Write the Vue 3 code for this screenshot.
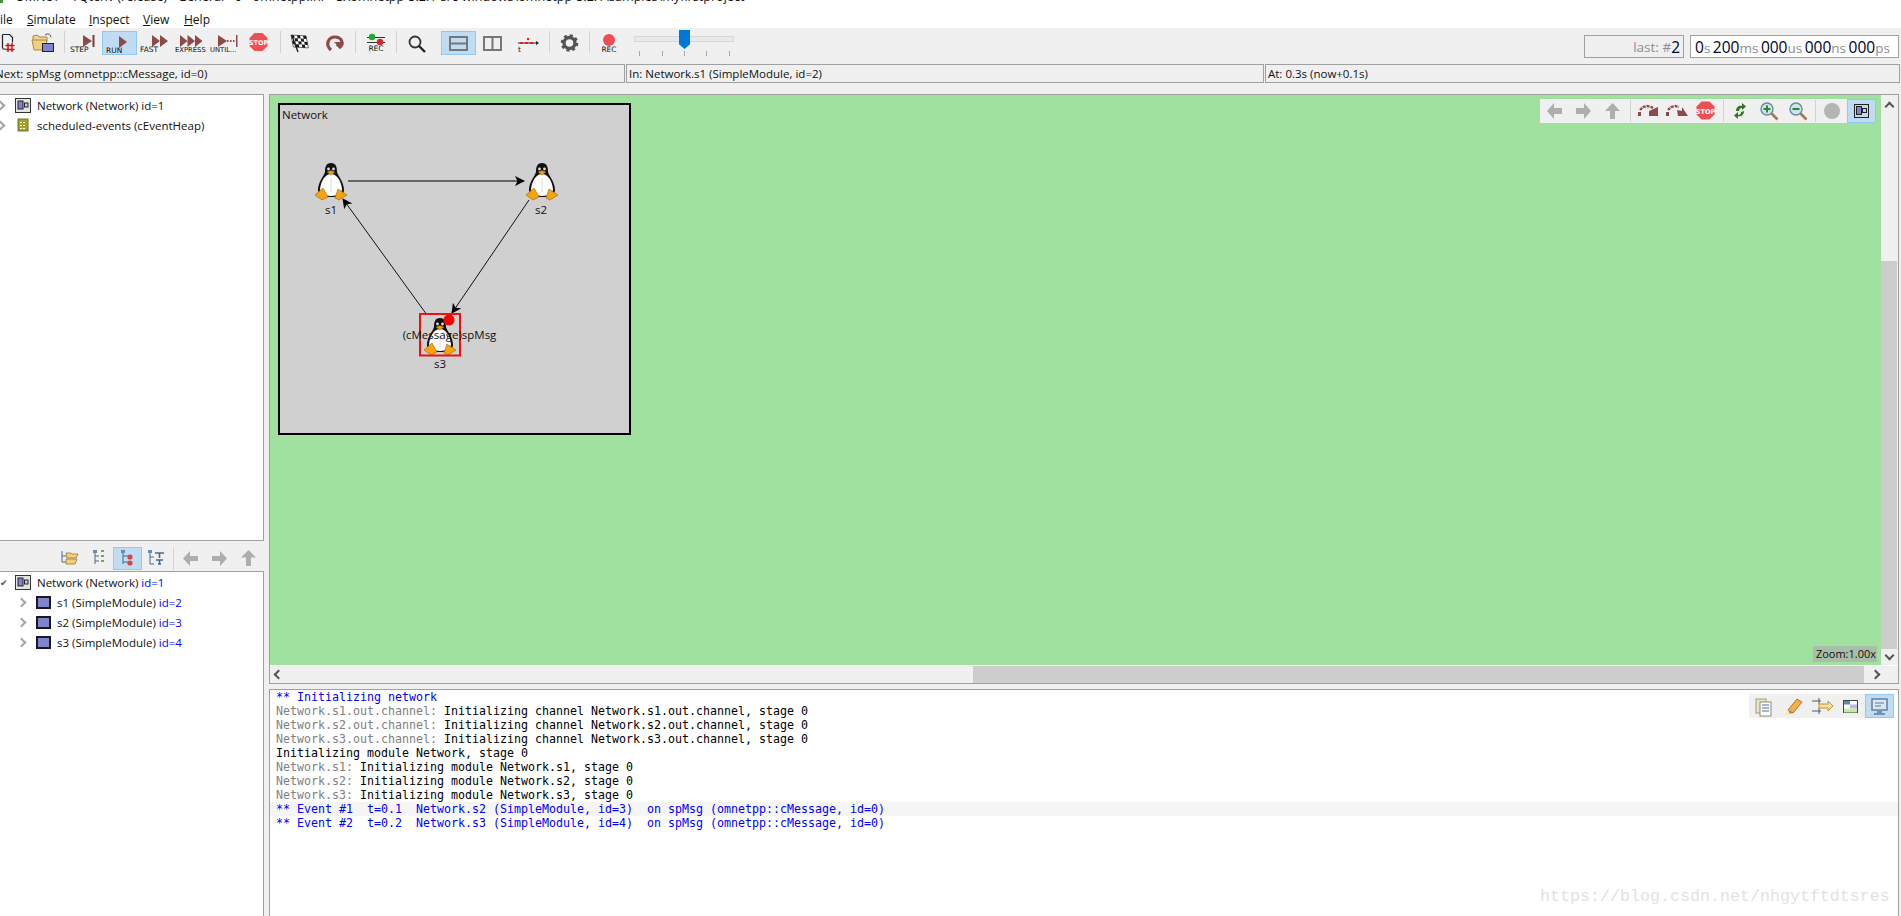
<script setup>
const menus = [
  { u: '', t: 'ile', w: 27 },
  { u: 'S', t: 'imulate', w: 62 },
  { u: 'I', t: 'nspect', w: 54 },
  { u: 'V', t: 'iew', w: 41 },
  { u: 'H', t: 'elp', w: 30 }
]
const ticks = [5, 28, 50, 72, 95]
const logLines = [
  { kind: 'info', text: '** Initializing network' },
  { pre: 'Network.s1.out.channel: ', text: 'Initializing channel Network.s1.out.channel, stage 0' },
  { pre: 'Network.s2.out.channel: ', text: 'Initializing channel Network.s2.out.channel, stage 0' },
  { pre: 'Network.s3.out.channel: ', text: 'Initializing channel Network.s3.out.channel, stage 0' },
  { text: 'Initializing module Network, stage 0' },
  { pre: 'Network.s1: ', text: 'Initializing module Network.s1, stage 0' },
  { pre: 'Network.s2: ', text: 'Initializing module Network.s2, stage 0' },
  { pre: 'Network.s3: ', text: 'Initializing module Network.s3, stage 0' },
  { kind: 'info hl', text: '** Event #1  t=0.1  Network.s2 (SimpleModule, id=3)  on spMsg (omnetpp::cMessage, id=0)' },
  { kind: 'info', text: '** Event #2  t=0.2  Network.s3 (SimpleModule, id=4)  on spMsg (omnetpp::cMessage, id=0)' }
]
const modules = [
  { name: 's1 (SimpleModule) ', id: 'id=2' },
  { name: 's2 (SimpleModule) ', id: 'id=3' },
  { name: 's3 (SimpleModule) ', id: 'id=4' }
]
const penguins = [
  { x: 331, y: 182 },
  { x: 542, y: 182 },
  { x: 440, y: 337 }
]
</script>

<template>
  <div class="app">
    <div class="title"><span class="title-icon"></span><span class="title-text">OMNeT++/Qtenv (release) - General - 0 - omnetpp.ini - C:\omnetpp-5.2.1-src-windows\omnetpp-5.2.1\samples\myfirstproject</span></div>
    <div class="menubar">
      <span v-for="m in menus" :key="m.t" class="menu" :style="{ width: m.w + 'px' }"><u>{{ m.u }}</u>{{ m.t }}</span>
    </div>

    <div class="toolbar">
      <div class="btn first">
        <svg width="26" height="24" viewBox="0 0 26 24"><path d="M2.500 3.500h7l3 3v5M2.500 3.500v14" fill="none" stroke="#222" stroke-width="1.200"/><path d="M2.500 18h3" stroke="#222"/><path d="M8 12v9M12 12v9M5.500 14.500h9M5.500 18.500h9" stroke="#d01010" stroke-width="1.400" fill="none"/></svg>
      </div>
      <div class="btn">
        <svg width="35" height="24" viewBox="0 0 35 24"><path d="M7 5l4-1 3 2h7v4H7z" fill="#e8d49a" stroke="#a88a3c"/><path d="M6 9h15l-2 10H8z" fill="#f2cf80" stroke="#b08a3c"/><rect x="16.500" y="12.500" width="11" height="8" fill="#7f85cc" stroke="#222"/><path d="M19 4c3-2 5-1 6 2" fill="none" stroke="#555"/></svg>
      </div>
      <i class="sep"></i>
      <div class="btn">
        <svg width="35" height="24" viewBox="0 0 35 24"><path d="M16 4l9 6-9 6z" fill="#8e4a4a"/><rect x="25.500" y="4" width="2" height="12" fill="#7c3a3a"/><text x="3" y="21" class="lbl">STEP</text></svg>
      </div>
      <div class="btn on">
        <svg width="35" height="24" viewBox="0 0 35 24"><path d="M17 5l8 6-8 6z" fill="#8e4a4a"/><text x="4" y="22" class="lbl">RUN</text></svg>
      </div>
      <div class="btn">
        <svg width="35" height="24" viewBox="0 0 35 24"><path d="M15 4l8 6-8 6zM23 4l8 6-8 6z" fill="#8e4a4a"/><text x="3" y="21" class="lbl">FAST</text></svg>
      </div>
      <div class="btn">
        <svg width="35" height="24" viewBox="0 0 35 24"><path d="M8 4l7.500 6-7.500 6zM15.500 4l7.500 6-7.500 6zM23 4l7.500 6-7.500 6z" fill="#8e4a4a"/><text x="3" y="21" class="lbl narrow">EXPRESS</text></svg>
      </div>
      <div class="btn">
        <svg width="35" height="24" viewBox="0 0 35 24"><path d="M11 4l9 6-9 6z" fill="#8e4a4a"/><path d="M20 10h9" stroke="#8e4a4a" stroke-dasharray="1.500 1.500" stroke-width="2"/><rect x="29" y="4" width="1.500" height="12" fill="#8e4a4a"/><text x="3" y="21" class="lbl narrow">UNTIL...</text></svg>
      </div>
      <div class="btn">
        <svg width="35" height="24" viewBox="0 0 35 24"><path d="M12.500 2h8l5 5v8l-5 5h-8l-5-5V7z" fill="#ee4f55"/><text x="16.500" y="14" class="stop" text-anchor="middle">STOP</text></svg>
      </div>
      <i class="sep"></i>
      <div class="btn">
        <svg width="35" height="24" viewBox="0 0 35 24">
          <g transform="matrix(1 .06 .2 1 8 4)">
            <rect width="15" height="12" fill="#fff" stroke="#222" stroke-width=".6"/>
            <path d="M0 0h3v3H0zM6 0h3v3H6zM12 0h3v3h-3zM3 3h3v3H3zM9 3h3v3H9zM0 6h3v3H0zM6 6h3v3H6zM12 6h3v3h-3zM3 9h3v3H3zM9 9h3v3H9z" fill="#1a1a1a"/>
          </g>
          <path d="M9 5l6 16" stroke="#222" stroke-width="1.400"/>
        </svg>
      </div>
      <div class="btn">
        <svg width="35" height="24" viewBox="0 0 35 24"><path d="M13 19c-6-5-3-13 4-13s9 7 5 10l-3-3" fill="none" stroke="#8e4a4a" stroke-width="3.200"/><path d="M16 11h7v7z" fill="#8e4a4a"/></svg>
      </div>
      <i class="sep s5"></i>
      <div class="btn">
        <svg width="35" height="24" viewBox="0 0 35 24"><path d="M9 6.500h18M9 11.500h18" stroke="#333" stroke-width="1.200"/><circle cx="14" cy="6" r="3.200" fill="#1faa2a"/><circle cx="22" cy="11" r="3.200" fill="#d8262c"/><text x="18" y="20" class="lbl" text-anchor="middle">REC</text></svg>
      </div>
      <i class="sep"></i>
      <div class="btn">
        <svg width="35" height="24" viewBox="0 0 35 24"><circle cx="16" cy="11" r="5.500" fill="none" stroke="#333" stroke-width="1.800"/><path d="M20 15l6 6" stroke="#222" stroke-width="2.400"/></svg>
      </div>
      <i class="sep s7 blank"></i>
      <div class="btn on">
        <svg width="35" height="24" viewBox="0 0 35 24"><rect x="9" y="6" width="17" height="13" fill="none" stroke="#777" stroke-width="2"/><path d="M9 12.500h17" stroke="#777" stroke-width="2"/></svg>
      </div>
      <div class="btn">
        <svg width="35" height="24" viewBox="0 0 35 24"><rect x="8" y="6" width="17" height="13" fill="none" stroke="#777" stroke-width="2"/><path d="M16.500 6v13" stroke="#777" stroke-width="2"/></svg>
      </div>
      <div class="btn">
        <svg width="35" height="24" viewBox="0 0 35 24"><path d="M7 12h20" stroke="#222"/><path d="M25 10l3 2-3 2z" fill="#222"/><path d="M9 12h3M14 12h3M19 12h3" stroke="#e02020" stroke-width="2"/><circle cx="17" cy="8" r="1.200" fill="#e02020"/><text x="7" y="21" class="lbl">t</text></svg>
      </div>
      <i class="sep"></i>
      <div class="btn">
        <svg width="35" height="24" viewBox="0 0 35 24"><circle cx="17.500" cy="12" r="5.500" fill="none" stroke="#555" stroke-width="3.400"/><circle cx="17.500" cy="12" r="7.500" fill="none" stroke="#555" stroke-width="2.600" stroke-dasharray="3 2.890"/></svg>
      </div>
      <i class="sep s5"></i>
      <div class="btn">
        <svg width="35" height="24" viewBox="0 0 35 24"><circle cx="17" cy="9" r="6" fill="#ee4f55"/><text x="17" y="21" class="lbl" text-anchor="middle">REC</text></svg>
      </div>
      <div class="slider">
        <div class="track"></div>
        <div class="handle"></div>
        <i v-for="t in ticks" :key="t" class="tick" :style="{ left: t + 'px' }"></i>
      </div>
      <div class="spacer"></div>
      <div class="last"><span class="gray">last: #</span><span class="big">2</span></div>
      <div class="time"><span class="time-in"><span class="big">0</span><span class="gray">s</span>&#32;<span class="big">200</span><span class="gray">ms</span>&#32;<span class="big">000</span><span class="gray">us</span>&#32;<span class="big">000</span><span class="gray">ns</span>&#32;<span class="big">000</span><span class="gray">ps</span></span></div>
    </div>

    <div class="status">
      <div class="cell c1"><span class="clip">Next: spMsg (omnetpp::cMessage, id=0)</span></div>
      <div class="cell c2">In: Network.s1 (SimpleModule, id=2)</div>
      <div class="cell c3">At: 0.3s (now+0.1s)</div>
    </div>

    <div class="main">
      <aside class="left">
        <div class="tree upper">
          <div class="row">
            <span class="chev top"></span>
            <svg class="tico" width="16" height="15" viewBox="0 0 16 15"><rect x=".5" y=".5" width="15" height="14" fill="#e4e4e4" stroke="#333"/><rect x="3" y="3" width="5" height="8" fill="#7f85cc" stroke="#222"/><rect x="9.500" y="5" width="3.500" height="4" fill="#c8c8e8" stroke="#222"/></svg>
            <span>Network (Network) id=1</span>
          </div>
          <div class="row">
            <span class="chev top"></span>
            <svg class="tico" width="16" height="15" viewBox="0 0 16 15"><rect x="3" y="1" width="10" height="12" fill="#a3a32a" stroke="#77771a"/><path d="M5 4.500h6M5 7.500h6M5 10.500h6" stroke="#fff" stroke-width="1.200" stroke-dasharray="2 1"/></svg>
            <span>scheduled-events (cEventHeap)</span>
          </div>
        </div>
        <div class="side-tools">
          <div class="tbtn"><svg width="29" height="23" viewBox="0 0 29 23"><path d="M7 4v11h4M7 9h4" fill="none" stroke="#4a6a8a"/><path d="M11 6h5l1 1h6l-2 4h-9zM11 12h11l-2 5h-9z" fill="#f2cf80" stroke="#b08a3c"/></svg></div>
          <div class="tbtn"><svg width="29" height="23" viewBox="0 0 29 23"><path d="M11 4v13M11 9h4M11 14h4" fill="none" stroke="#4a6a8a"/><rect x="9" y="3" width="4" height="3" fill="#6a8ab0"/><path d="M17 8h3v2h-3zM17 13h3v2h-3zM17 3h3v2h-3z" fill="#6ab04a"/></svg></div>
          <div class="tbtn on"><svg width="29" height="23" viewBox="0 0 29 23"><path d="M10 4v13M10 9h5M10 15h5" fill="none" stroke="#4a6a8a"/><rect x="8" y="3" width="4" height="3" fill="#6a8ab0"/><circle cx="17" cy="10" r="2.600" fill="#e04040"/><circle cx="17" cy="16" r="2.600" fill="#e04040"/></svg></div>
          <div class="tbtn"><svg width="29" height="23" viewBox="0 0 29 23"><path d="M8 5v12h4M8 10h4" fill="none" stroke="#4a6a8a"/><rect x="6" y="3" width="4" height="3" fill="#6a8ab0"/><path d="M13 6h9M17.500 6v5M14 13h7M17.500 13v4M16 17h3" fill="none" stroke="#4a6a8a" stroke-width="1.600"/></svg></div>
          <i class="sep s5"></i>
          <div class="tbtn"><svg width="29" height="23" viewBox="0 0 29 23"><path d="M14 4l-7 7.500 7 7.500v-5h8v-5h-8z" fill="#aeaeae"/></svg></div>
          <div class="tbtn"><svg width="29" height="23" viewBox="0 0 29 23"><path d="M15 4l7 7.500-7 7.500v-5H7V9h8z" fill="#aeaeae"/></svg></div>
          <div class="tbtn"><svg width="29" height="23" viewBox="0 0 29 23"><path d="M14.500 3l7.500 7.500h-5V19h-5v-8.500H7z" fill="#aeaeae"/></svg></div>
        </div>
        <div class="tree lower">
          <div class="row">
            <span class="check">✔</span>
            <svg class="tico" width="16" height="15" viewBox="0 0 16 15"><rect x=".5" y=".5" width="15" height="14" fill="#e4e4e4" stroke="#333"/><rect x="3" y="3" width="5" height="8" fill="#7f85cc" stroke="#222"/><rect x="9.500" y="5" width="3.500" height="4" fill="#c8c8e8" stroke="#222"/></svg>
            <span>Network (Network) <b class="blue">id=1</b></span>
          </div>
          <div v-for="m in modules" :key="m.id" class="row child">
            <span class="chev"></span>
            <span class="mod"></span>
            <span>{{ m.name }}<b class="blue">{{ m.id }}</b></span>
          </div>
        </div>
      </aside>

      <section class="right">
        <div class="canvas-panel">
          <div class="canvas-row">
            <div class="green">
              <svg class="net" width="353" height="332" viewBox="278 103 353 332">
                <defs>
                  <marker id="arrow" markerWidth="10" markerHeight="10" refX="9" refY="5" orient="auto" markerUnits="userSpaceOnUse">
                    <path d="M0 0L10 5L0 10L2.500 5z" fill="#000"/>
                  </marker>
                  <g id="tux">
                    <path d="M0-19C-5-19-6-15-6-10C-7-6-13 0-13 8C-13 13-8 15 0 15C8 15 13 13 13 8C13 0 7-6 6-10C6-15 5-19 0-19z" fill="#111"/>
                    <path d="M0-8C-6-8-10-1-11 7C-11 11-7 14 0 14C7 14 11 11 11 7C10-1 6-8 0-8z" fill="#fff"/>
                    <path d="M0-4v14" stroke="#ccc" stroke-width=".7"/>
                    <circle cx="-2.500" cy="-13" r="1.400" fill="#ddd"/>
                    <circle cx="2.500" cy="-13" r="1.400" fill="#ddd"/>
                    <path d="M-4-10L0-11.500L4-10L0-7z" fill="#f0a010" stroke="#8a5a00" stroke-width=".5"/>
                    <path d="M-16 13L-8 6L-3 15L-9 18z" fill="#f5a30f" stroke="#a06800" stroke-width=".6"/>
                    <path d="M16 13L7 7L4 16L8 18z" fill="#f5a30f" stroke="#a06800" stroke-width=".6"/>
                  </g>
                </defs>
                <rect x="279" y="104" width="351" height="330" fill="#d0d0d0" stroke="#000" stroke-width="2"/>
                <text x="282" y="119" class="ntext">Network</text>
                <path d="M348 181H524" stroke="#666" stroke-width="2" marker-end="url(#arrow)"/>
                <path d="M529 200L452 313" stroke="#111" marker-end="url(#arrow)"/>
                <path d="M427 315L343 199" stroke="#111" marker-end="url(#arrow)"/>
                <use v-for="p in penguins" :key="p.x" href="#tux" :x="p.x" :y="p.y"/>
                <rect x="420" y="314" width="40" height="41.500" fill="none" stroke="#f01010" stroke-width="2"/>
                <circle cx="449" cy="320" r="5.500" fill="#f60000"/>
                <text x="331" y="214" class="ntext" text-anchor="middle">s1</text>
                <text x="541" y="214" class="ntext" text-anchor="middle">s2</text>
                <text x="440" y="368" class="ntext" text-anchor="middle">s3</text>
                <text x="449.500" y="339" class="ntext" text-anchor="middle">(cMessage)spMsg</text>
              </svg>
              <div class="view-tools">
                <div class="tbtn"><svg width="29" height="24" viewBox="0 0 29 24"><path d="M14 4l-7 8 7 8v-5h8V9h-8z" fill="#aeaeae"/></svg></div>
                <div class="tbtn"><svg width="29" height="24" viewBox="0 0 29 24"><path d="M15 4l7 8-7 8v-5H7V9h8z" fill="#aeaeae"/></svg></div>
                <div class="tbtn w30"><svg width="29" height="24" viewBox="0 0 29 24"><path d="M14.500 4l7.500 8h-5v8h-5v-8H7z" fill="#aeaeae"/></svg></div>
                <i class="sep s5"></i>
                <div class="tbtn"><svg width="29" height="24" viewBox="0 0 29 24"><path d="M5 17v-4h3v4z" fill="#8e4a4a"/><path d="M7 11l3-3 4-1 4 1 2 1" fill="none" stroke="#8e4a4a" stroke-width="2.400" stroke-dasharray="3 1"/><path d="M16 12l9-4v9H16z" fill="#8e4a4a"/></svg></div>
                <div class="tbtn"><svg width="29" height="24" viewBox="0 0 29 24"><path d="M4 17v-4h3v4z" fill="#8e4a4a"/><path d="M6 11l3-3 4-1 4 1" fill="none" stroke="#8e4a4a" stroke-width="2.400" stroke-dasharray="3 1"/><path d="M15 11l5 1V8l6 9H16z" fill="#8e4a4a"/></svg></div>
                <div class="tbtn"><svg width="29" height="24" viewBox="0 0 29 24"><path d="M10.500 2.500h8l5 5v8l-5 5h-8l-5-5v-8z" fill="#ee4f55"/><text x="14.500" y="14.500" class="stop" text-anchor="middle">STOP</text></svg></div>
                <i class="sep s6"></i>
                <div class="tbtn"><svg width="29" height="24" viewBox="0 0 29 24"><path d="M10 12c0-4 3-6 6-5V4l4 3.500-4 3.500V9c-2 0-3 1-3 3zM18 12c0 4-3 6-6 5v3l-4-3.500 4-3.500v3c2 0 3-1 3-3z" fill="#2a7a1a"/></svg></div>
                <div class="tbtn"><svg width="29" height="24" viewBox="0 0 29 24"><circle cx="12" cy="10" r="6" fill="#cfe4ee" stroke="#6b8a9a" stroke-width="1.400"/><path d="M12 6.500v7M8.500 10h7" stroke="#2a8a2a" stroke-width="2"/><path d="M16.500 14.500l6 6" stroke="#a8784a" stroke-width="2.600"/></svg></div>
                <div class="tbtn"><svg width="29" height="24" viewBox="0 0 29 24"><circle cx="12" cy="10" r="6" fill="#cfe4ee" stroke="#6b8a9a" stroke-width="1.400"/><path d="M8.500 10h7" stroke="#2a8a2a" stroke-width="2"/><path d="M16.500 14.500l6 6" stroke="#a8784a" stroke-width="2.600"/></svg></div>
                <i class="sep s3"></i>
                <div class="tbtn"><svg width="29" height="24" viewBox="0 0 29 24"><circle cx="14" cy="12" r="8" fill="#b4b4b4"/></svg></div>
                <div class="tbtn on"><svg width="29" height="24" viewBox="0 0 29 24"><rect x="7.500" y="5.500" width="14" height="13" fill="#c8d8ec" stroke="#222"/><rect x="9.500" y="7.500" width="5" height="8" fill="#7f85cc" stroke="#222"/><rect x="15.500" y="9.500" width="4" height="4" fill="#c8c8e8" stroke="#222"/></svg></div>
              </div>
              <div class="zoom">Zoom:1.00x</div>
            </div>
            <div class="vscroll">
              <span class="arrow au"></span>
              <div class="vthumb"></div>
              <span class="arrow ad"></span>
            </div>
          </div>
          <div class="hscroll">
            <span class="arrow al"></span>
            <div class="hthumb"></div>
            <span class="arrow ar"></span>
          </div>
        </div>

        <div class="log-panel">
          <div v-for="(l, i) in logLines" :key="i" class="line" :class="l.kind"><span v-if="l.pre" class="pre">{{ l.pre }}</span>{{ l.text }}</div>
          <div class="log-tools">
            <div class="tbtn"><svg width="29" height="24" viewBox="0 0 29 24"><rect x="7" y="5" width="10" height="14" fill="#e8e2c8" stroke="#a89a70"/><rect x="11" y="8" width="11" height="14" fill="#fff" stroke="#8a8a70"/><path d="M13 11h7M13 14h7M13 17h7" stroke="#4a6a9a"/></svg></div>
            <div class="tbtn"><svg width="29" height="24" viewBox="0 0 29 24"><path d="M10 16L19 5l5 3-9 11z" fill="#f2b04a" stroke="#b07a20"/><path d="M10 16l5 3-4 1z" fill="#888"/><path d="M6 22l4-6 2 4z" fill="#f8e8a0"/></svg></div>
            <div class="tbtn"><svg width="29" height="24" viewBox="0 0 29 24"><path d="M5 7h9M5 17h9M12 4v6M12 14v6" stroke="#4a5a6a" fill="none"/><path d="M12 10h9V7l5 5-5 5v-3h-9z" fill="#f8e0a0" stroke="#c8902a"/></svg></div>
            <div class="tbtn"><svg width="29" height="24" viewBox="0 0 29 24"><rect x="7.500" y="6.500" width="14" height="12" fill="#fff" stroke="#444"/><rect x="8" y="7" width="6" height="3.500" fill="#5a8ab0"/><rect x="14" y="10.500" width="7" height="4" fill="#b8b8e8"/><rect x="8" y="14.500" width="13" height="4" fill="#c8e8a8"/></svg></div>
            <div class="tbtn on"><svg width="29" height="24" viewBox="0 0 29 24"><rect x="7" y="5" width="15" height="11" fill="#dbe6f0" stroke="#5a7a9a" stroke-width="1.400"/><path d="M10 9h9M10 12h6" stroke="#5a7a9a"/><path d="M12 18h5M9 20h11" stroke="#5a7a9a" stroke-width="1.400"/></svg></div>
          </div>
        </div>
      </section>
    </div>
    <div class="watermark">https://blog.csdn.net/nhgytftdtsres</div>
  </div>
</template>

<style>
html, body { margin: 0; padding: 0; background: #fff; overflow: hidden; }
</style>

<style scoped>
.app {
  width: 1901px;
  height: 916px;
  position: relative;
  overflow: hidden;
  background: #f0f0f0;
  font-family: "Open Sans", "Noto Sans", sans-serif;
  font-size: 11.500px;
  color: #111;
  display: flex;
  flex-direction: column;
}
.title {
  height: 4px;
  background: #fff;
  overflow: hidden;
  display: flex;
  white-space: nowrap;
  font-size: 12.600px;
  line-height: 4px;
}
.title-icon { width: 3px; height: 3px; background: #3a9a3a; margin-right: 12px; }
.title-text { display: block; margin-top: -5px; }
.menubar {
  height: 24px;
  background: #fff;
  display: flex;
  align-items: center;
  box-sizing: border-box;
  padding-top: 6px;
  font-size: 12px;
  overflow: hidden;
}
.menu { flex: none; }
.toolbar {
  height: 36px;
  box-sizing: border-box;
  padding-top: 3px;
  display: flex;
  align-items: flex-start;
  background: #f0f0f0;
}
.btn {
  width: 35px;
  height: 24px;
  flex: none;
  box-sizing: border-box;
  position: relative;
}
.btn svg { position: absolute; left: 0; top: 0; overflow: visible; }
.btn.first { width: 26px; }
.btn.on, .tbtn.on { background: #c0dcf3; box-shadow: inset 0 0 0 1px #90c8f6; }
.sep {
  flex: none;
  width: 6px;
  height: 22px;
  display: flex;
  justify-content: center;
  position: relative;
}
.sep::after {
  content: "";
  display: block;
  width: 1px;
  height: 100%;
  background: #d2d2d2;
}
.sep.s5 { width: 5px; }
.sep.s6 { width: 6px; }
.sep.s3 { width: 5px; }
.sep.s7 { width: 7px; }
.sep.blank::after { background: transparent; }
.lbl {
  font-family: "DejaVu Sans", sans-serif;
  font-size: 7.500px;
  fill: #111;
}
.lbl.narrow { font-size: 6.800px; }
.stop {
  font-family: "DejaVu Sans", sans-serif;
  font-size: 6.500px;
  font-weight: 700;
  fill: #fff;
}
.slider {
  position: relative;
  width: 100px;
  height: 30px;
  margin-left: 7px;
  flex: none;
}
.track {
  position: absolute;
  left: 0;
  right: 0;
  top: 6px;
  height: 4px;
  background: #e7eaea;
  border: 1px solid #d6d6d6;
  box-sizing: content-box;
  margin-top: -1px;
}
.handle {
  position: absolute;
  left: 45px;
  top: -1px;
  width: 11px;
  height: 19px;
  background: #0078d7;
  clip-path: polygon(0 0, 100% 0, 100% 75%, 50% 100%, 0 75%);
}
.tick {
  position: absolute;
  top: 20px;
  width: 1px;
  height: 5px;
  background: #a8a8a8;
}
.spacer { flex: 1; }
.last, .time {
  height: 23px;
  margin-top: 4px;
  box-sizing: border-box;
  border: 1px solid #a0a0a0;
  display: flex;
  align-items: center;
  white-space: pre;
  font-size: 13.500px;
}
.last {
  width: 100px;
  justify-content: flex-end;
  padding-right: 3px;
  margin-right: 6px;
}
.time {
  width: 209px;
  margin-right: 2px;
  background: #fff;
  padding-left: 4px;
  overflow: hidden;
}
.time-in { display: block; white-space: pre; word-spacing: -1px; }
.gray { color: #8e8e8e; }
.big { color: #000028; font-size: 15.500px; }
.status {
  height: 19px;
  display: flex;
  flex: none;
}
.cell {
  box-sizing: border-box;
  border: 1px solid #a0a0a0;
  height: 19px;
  line-height: 17px;
  padding-left: 2px;
  white-space: nowrap;
  overflow: hidden;
}
.c1 { width: 626px; margin-left: -1px; border-left: 0; padding-left: 0; }
.clip { display: block; margin-left: -4px; }
.c2 { width: 638px; margin-left: 1px; }
.c3 { width: 635px; margin-left: 1px; }
.main {
  margin-top: 11px;
  flex: 1;
  min-height: 0;
  display: flex;
}
.left {
  width: 264px;
  flex: none;
  display: flex;
  flex-direction: column;
  margin-right: 5px;
}
.tree {
  background: #fff;
  box-sizing: border-box;
  border-right: 1px solid #a0a0a0;
}
.upper {
  height: 447px;
  border-top: 1px solid #a0a0a0;
  border-bottom: 1px solid #a0a0a0;
  padding-top: 0;
}
.lower {
  flex: 1;
  border-top: 1px solid #a0a0a0;
  padding-top: 0;
}
.row {
  height: 20px;
  display: flex;
  align-items: center;
  white-space: pre;
  position: relative;
  padding-left: 15px;
}
.row.child { padding-left: 36px; }
.tico { margin-right: 6px; flex: none; }
.chev {
  position: absolute;
  left: 18px;
  width: 5px;
  height: 5px;
  border-top: 2px solid #a6a6a6;
  border-right: 2px solid #a6a6a6;
  transform: rotate(45deg);
}
.chev.top { left: -3px; }
.check {
  position: absolute;
  left: 0;
  font-size: 9px;
  color: #555;
}
.mod {
  width: 15px;
  height: 13px;
  box-sizing: border-box;
  border: 2px solid #1a1a1a;
  background: #7f85cc;
  margin-right: 6px;
  flex: none;
}
.blue { color: #0000ff; font-weight: 400; }
.side-tools {
  height: 30px;
  flex: none;
  display: flex;
  justify-content: flex-end;
  padding-top: 6px;
  padding-right: 1px;
  box-sizing: border-box;
}
.side-tools .sep { height: 23px; }
.tbtn {
  width: 29px;
  height: 24px;
  flex: none;
}
.side-tools .tbtn { height: 23px; }
.tbtn svg { display: block; overflow: visible; }
.tbtn.w30 { width: 30px; }
.right {
  width: 1630px;
  margin-right: 2px;
  display: flex;
  flex-direction: column;
  gap: 5px;
}
.canvas-panel {
  height: 590px;
  flex: none;
  box-sizing: border-box;
  border: 1px solid #a0a0a0;
  display: flex;
  flex-direction: column;
}
.canvas-row {
  flex: 1;
  min-height: 0;
  display: flex;
  border-bottom: 1px solid #fff;
}
.green {
  flex: 1;
  position: relative;
  background: #a0e1a0;
}
.net {
  position: absolute;
  left: 8px;
  top: 8px;
}
.ntext {
  font-family: "Open Sans", sans-serif;
  font-size: 11.500px;
  fill: #111;
}
.view-tools {
  position: absolute;
  top: 4px;
  right: 5px;
  height: 24px;
  display: flex;
  background: #f0f0f0;
}
.view-tools .sep { height: 22px; margin-top: 1px; }
.zoom {
  position: absolute;
  right: 4px;
  bottom: 3px;
  height: 16px;
  line-height: 16px;
  padding: 0 1px 0 3px;
  background: #a9bea9;
  font-size: 11px;
}
.vscroll {
  width: 17px;
  flex: none;
  position: relative;
  background: #f0f0f0;
}
.vthumb {
  position: absolute;
  top: 166px;
  left: 0;
  width: 16px;
  height: 388px;
  background: #cdcdcd;
}
.hscroll {
  height: 17px;
  flex: none;
  position: relative;
  background: #f0f0f0;
}
.hthumb {
  position: absolute;
  left: 703px;
  top: 0;
  width: 891px;
  height: 100%;
  background: #cdcdcd;
}
.arrow {
  position: absolute;
  width: 5px;
  height: 5px;
  border-top: 2px solid #555;
  border-right: 2px solid #555;
  box-sizing: content-box;
}
.au { left: 5px; top: 8px; transform: rotate(-45deg); }
.ad { left: 5px; top: 557px; transform: rotate(135deg); }
.al { left: 5px; top: 5px; transform: rotate(-135deg); }
.ar { left: 1602px; top: 5px; transform: rotate(45deg); }
.log-panel {
  flex: 1;
  min-height: 0;
  position: relative;
  box-sizing: border-box;
  background: #fff;
  border: 1px solid #a0a0a0;
  border-bottom: 0;
  font-family: "DejaVu Sans Mono", monospace;
  font-size: 11.630px;
  color: #000;
}
.line {
  height: 14px;
  line-height: 14px;
  padding-left: 6px;
  white-space: pre;
}
.pre { color: #808080; }
.info { color: #0000ff; }
.hl { background: #f5f5f5; }
.log-tools {
  position: absolute;
  top: 4px;
  right: 4px;
  height: 24px;
  display: flex;
  background: #f0f0f0;
}
.watermark {
  position: absolute;
  left: 1540px;
  top: 887px;
  font-family: "Liberation Mono", monospace;
  font-size: 16.670px;
  color: #e3e3dd;
  white-space: pre;
}
</style>
